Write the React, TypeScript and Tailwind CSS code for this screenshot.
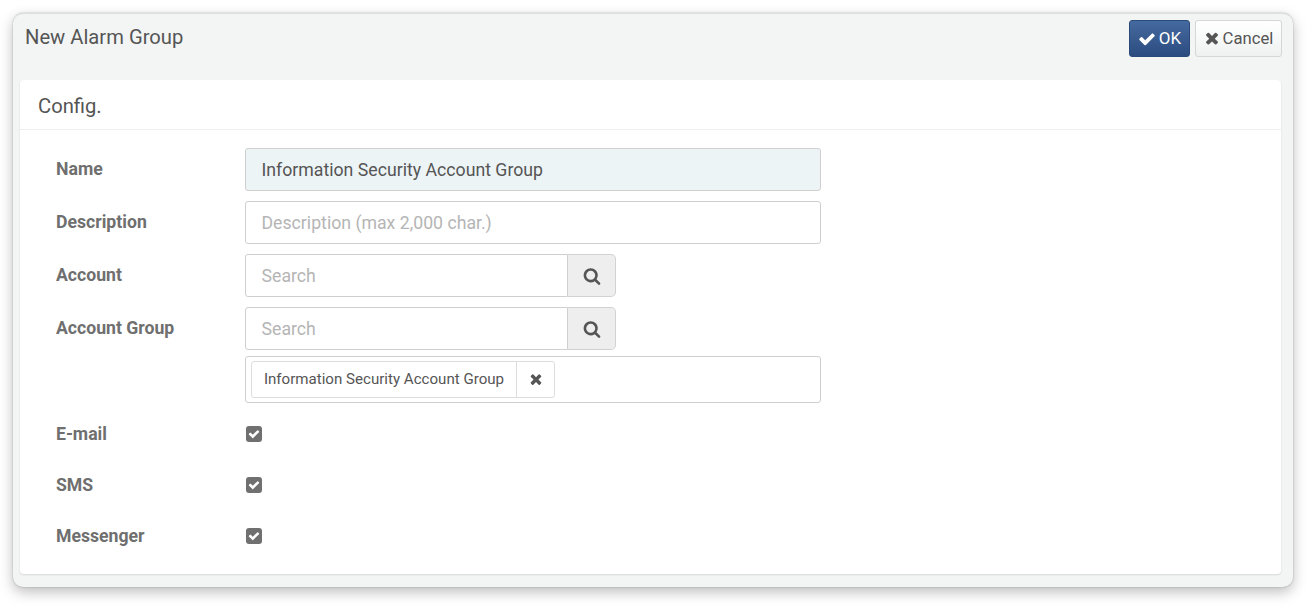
import type { ReactNode } from "react";

const inputClass =
  "h-[43px] rounded-[3px] border border-[#cfcfcf] px-[15.5px] text-[17.7px] text-[#555] outline-none placeholder:text-[#b5b5b5]";

// Font Awesome 4 shapes, the newer sets are thinner than the picture
const checkPath =
  "M1671 566q0 40-28 68l-724 724-136 136q-28 28-68 28t-68-28l-136-136-362-362q-28-28-28-68t28-68l136-136q28-28 68-28t68 28l294 295 656-657q28-28 68-28t68 28l136 136q28 28 28 68z";
const timesPath =
  "M1490 1322q0 40-28 68l-136 136q-28 28-68 28t-68-28l-294-294-294 294q-28 28-68 28t-68-28l-136-136q-28-28-28-68t28-68l294-294-294-294q-28-28-28-68t28-68l136-136q28-28 68-28t68 28l294 294 294-294q28-28 68-28t68 28l136 136q28 28 28 68t-28 68l-294 294 294 294q28 28 28 68z";
const searchPath =
  "M1216 832q0-185-131.5-316.5t-316.5-131.5-316.5 131.5-131.5 316.5 131.5 316.5 316.5 131.5 316.5-131.5 131.5-316.5zm512 832q0 52-38 90t-90 38q-54 0-90-38l-343-342q-179 124-399 124-143 0-273.5-55.5t-225-150-150-225-55.5-273.5 55.5-273.5 150-225 225-150 273.5-55.5 273.5 55.5 225 150 150 225 55.5 273.5q0 220-124 399l343 343q37 37 37 90z";

function Icon({ path, className }: { path: string; className: string }) {
  return (
    <svg viewBox="0 0 1792 1792" fill="currentColor" aria-hidden="true" className={className}>
      <path d={path} />
    </svg>
  );
}

function Row({
  label,
  className,
  labelClassName,
  children,
}: {
  label: string;
  className?: string;
  labelClassName?: string;
  children: ReactNode;
}) {
  return (
    <div className={`flex ${className ?? ""}`}>
      <label
        className={`w-[189px] shrink-0 text-[17.65px] font-bold text-[#6f6f6f] ${labelClassName ?? "leading-[42px]"}`}
      >
        {label}
      </label>
      <div className="w-[576px]">{children}</div>
    </div>
  );
}

function SearchField() {
  return (
    <div className="flex h-[43px] w-[371px]">
      <input placeholder="Search" className={`${inputClass} w-[323px] rounded-r-none`} />
      <button
        type="button"
        className="flex w-[48px] items-center justify-center rounded-r-[5px] border border-l-0 border-[#d2d2d2] bg-[#eeeeee] text-[#555]"
      >
        <Icon path={searchPath} className="h-[18px] w-[18px]" />
      </button>
    </div>
  );
}

function Check() {
  return (
    <span className="ml-[1px] flex h-[16px] w-[16px] items-center justify-center rounded-[3px] bg-[#707070] text-white">
      <Icon path={checkPath} className="h-[12px] w-[12px]" />
    </span>
  );
}

export default function App() {
  return (
    <div className="h-[608px] bg-white p-[13px] pr-[21px] font-['Roboto',sans-serif]">
      <div className="h-[574px] rounded-[10px] border-t border-[#dcdfdf] bg-[#f3f5f5] px-[7px] pb-[13px] pr-[12px] shadow-[0_0_2px_rgba(0,0,0,0.25),0_5px_14px_rgba(0,0,0,0.26)]">
        <header className="-mr-[1px] flex h-[66px] items-start justify-between pt-[6px]">
          <h1 className="pl-[5px] pt-[3px] text-[20.2px] leading-[28px] text-[#555]">New Alarm Group</h1>
          <div className="flex gap-[5px]">
            <button
              type="button"
              className="flex h-[37px] w-[61px] items-center justify-center gap-[3px] rounded-[3px] border border-[#2b4a7c] bg-gradient-to-b from-[#456a9f] to-[#2c4c80] text-[17px] text-white"
            >
              <Icon path={checkPath} className="h-[18px] w-[18px]" />
              OK
            </button>
            <button
              type="button"
              className="flex h-[37px] w-[87px] items-center justify-center gap-[2px] rounded-[3px] border border-[#d5d7d7] bg-gradient-to-b from-[#ffffff] to-[#eff1f1] text-[16.7px] text-[#555]"
            >
              <Icon path={timesPath} className="-ml-[1px] -mt-[1px] h-[18px] w-[18px]" />
              Cancel
            </button>
          </div>
        </header>

        <section className="h-[494px] rounded-[4px] bg-white shadow-[0_1px_2px_rgba(0,0,0,0.12)]">
          <h2 className="h-[50px] border-b border-[#eeeeee] pl-[18px] pt-[12px] text-[20.2px] leading-[28px] text-[#555]">
            Config.
          </h2>
          <form className="flex flex-col pl-[36px] pt-[18px]">
            <Row label="Name">
              <input
                defaultValue="Information Security Account Group"
                className={`${inputClass} w-full bg-[#edf4f6]`}
              />
            </Row>
            <Row label="Description" className="mt-[10px]">
              <input placeholder="Description (max 2,000 char.)" className={`${inputClass} w-full`} />
            </Row>
            <Row label="Account" className="mt-[10px]">
              <SearchField />
            </Row>
            <Row label="Account Group" className="mt-[10px]">
              <SearchField />
              <div className="mt-[6px] flex h-[47px] items-center rounded-[3px] border border-[#cfcfcf] px-[5px]">
                <div className="flex h-[37px] items-center rounded-[3px] border border-[#dddddd] text-[15.1px] text-[#555]">
                  <span className="flex h-full w-[265px] items-center justify-center border-r border-[#dddddd]">
                    Information Security Account Group
                  </span>
                  <span className="flex h-full w-[37px] items-center justify-center">
                    <Icon path={timesPath} className="-mt-[2px] h-[16px] w-[16px]" />
                  </span>
                </div>
              </div>
            </Row>
            <Row label="E-mail" labelClassName="leading-[24px]" className="mt-[19px] items-center">
              <Check />
            </Row>
            <Row label="SMS" labelClassName="leading-[24px]" className="mt-[27px] items-center">
              <Check />
            </Row>
            <Row label="Messenger" labelClassName="leading-[24px]" className="mt-[27px] items-center">
              <Check />
            </Row>
          </form>
        </section>
      </div>
    </div>
  );
}
